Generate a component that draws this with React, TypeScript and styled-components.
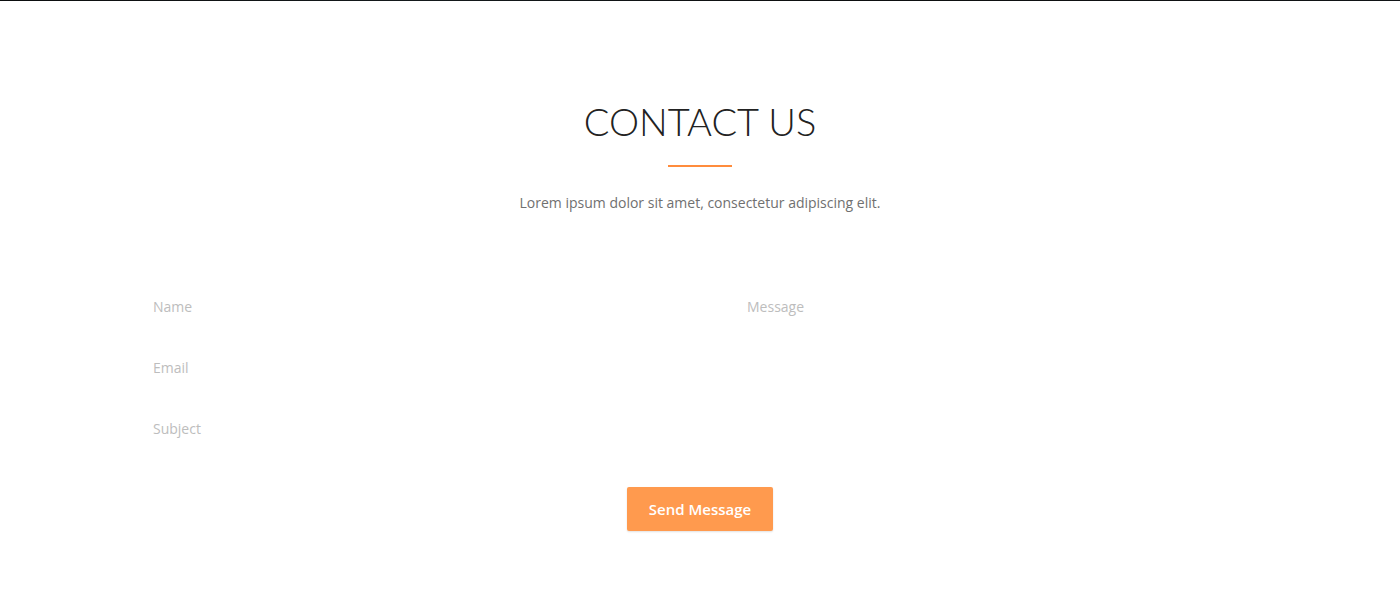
import React from "react";
import styled, { createGlobalStyle } from "styled-components";

const Global = createGlobalStyle`
  html, body { margin: 0; padding: 0; background: #fff; }
  body { font-family: "Open Sans", "Liberation Sans", sans-serif; }
  * { box-sizing: border-box; }
`;

const TopStrip = styled.div`
  height: 1px;
  background: linear-gradient(90deg, #0b0d0e, #14191b 30%, #0c0e0f 60%, #111416);
`;

const Section = styled.section`
  padding-top: 94px;
  padding-bottom: 80px;
  display: flex;
  flex-direction: column;
  align-items: center;
`;

const Title = styled.h2`
  margin: 0;
  font-family: Lato, "Open Sans", sans-serif;
  font-weight: 300;
  font-size: 38px;
  line-height: 52px;
  color: #222;
  letter-spacing: 0;
`;

const Divider = styled.div`
  width: 64px;
  height: 2px;
  background: #ff8c3c;
  margin-top: 18px;
`;

const Lead = styled.p`
  margin: 25px 0 0;
  font-size: 14px;
  line-height: 22px;
  color: #707070;
`;

const Form = styled.form`
  width: 1124px;
  margin-top: 62px;
  display: grid;
  grid-template-columns: 1fr 1fr;
  column-gap: 64px;
`;

const Column = styled.div`
  display: flex;
  flex-direction: column;
`;

const Field = styled.input`
  border: none;
  outline: none;
  background: transparent;
  height: 61px;
  padding: 0 15px;
  font-family: "Open Sans", sans-serif;
  font-size: 14px;
  color: #444;
  &::placeholder { color: #bdbdbd; }
`;

const Area = styled.textarea`
  border: none;
  outline: none;
  resize: none;
  background: transparent;
  height: 183px;
  padding: 21px 15px;
  font-family: "Open Sans", sans-serif;
  font-size: 14px;
  line-height: 20px;
  color: #444;
  &::placeholder { color: #bdbdbd; }
`;

const Button = styled.button`
  margin-top: 28px;
  width: 146px;
  height: 44px;
  border: none;
  border-radius: 2px;
  background: #ff9a4e;
  color: #fff;
  font-family: "Open Sans", sans-serif;
  font-weight: 600;
  font-size: 15px;
  box-shadow: 0 1px 2px rgba(0,0,0,0.12);
  cursor: pointer;
`;

export default function App() {
  return (
    <>
      <Global />
      <TopStrip />
      <Section>
        <Title>CONTACT US</Title>
        <Divider />
        <Lead>Lorem ipsum dolor sit amet, consectetur adipiscing elit.</Lead>
        <Form onSubmit={(e) => e.preventDefault()}>
          <Column>
            <Field placeholder="Name" />
            <Field placeholder="Email" />
            <Field placeholder="Subject" />
          </Column>
          <Column>
            <Area placeholder="Message" />
          </Column>
        </Form>
        <Button type="button">Send Message</Button>
      </Section>
    </>
  );
}
